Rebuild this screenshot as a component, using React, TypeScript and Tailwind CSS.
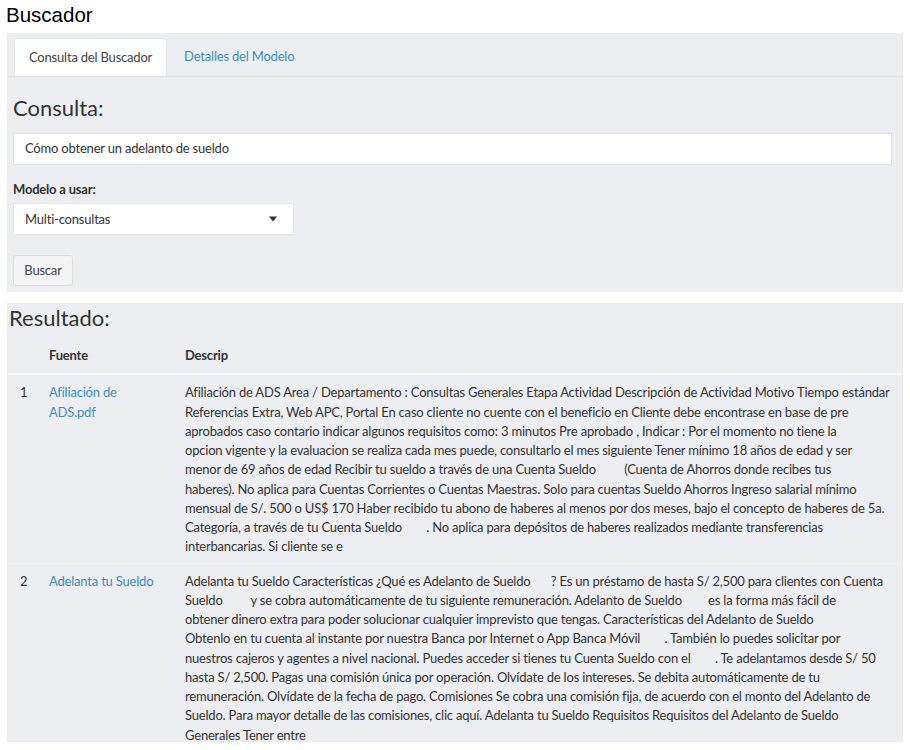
import React from 'react';

const gap = (w: string) => <span className={`inline-block ${w}`} />;

const row1: React.ReactNode[] = [
  'Afiliación de ADS Area / Departamento : Consultas Generales Etapa Actividad Descripción de Actividad Motivo Tiempo estándar',
  'Referencias Extra, Web APC, Portal En caso cliente no cuente con el beneficio en Cliente debe encontrase en base de pre',
  'aprobados caso contario indicar algunos requisitos como: 3 minutos Pre aprobado , Indicar : Por el momento no tiene la',
  'opcion vigente y la evaluacion se realiza cada mes puede, consultarlo el mes siguiente Tener mínimo 18 años de edad y ser',
  <>menor de 69 años de edad Recibir tu sueldo a través de una Cuenta Sueldo {gap('w-[22px]')} (Cuenta de Ahorros donde recibes tus</>,
  'haberes). No aplica para Cuentas Corrientes o Cuentas Maestras. Solo para cuentas Sueldo Ahorros Ingreso salarial mínimo',
  'mensual de S/. 500 o US$ 170 Haber recibido tu abono de haberes al menos por dos meses, bajo el concepto de haberes de 5a.',
  <>Categoría, a través de tu Cuenta Sueldo {gap('w-[18px]')} . No aplica para depósitos de haberes realizados mediante transferencias</>,
  'interbancarias. Si cliente se e',
];

const row2: React.ReactNode[] = [
  <>Adelanta tu Sueldo Características ¿Qué es Adelanto de Sueldo {gap('w-[14px]')} ? Es un préstamo de hasta S/ 2,500 para clientes con Cuenta</>,
  <>Sueldo {gap('w-[22px]')} y se cobra automáticamente de tu siguiente remuneración. Adelanto de Sueldo {gap('w-[20px]')} es la forma más fácil de</>,
  'obtener dinero extra para poder solucionar cualquier imprevisto que tengas. Características del Adelanto de Sueldo',
  <>Obtenlo en tu cuenta al instante por nuestra Banca por Internet o App Banca Móvil {gap('w-[18px]')} . También lo puedes solicitar por</>,
  <>nuestros cajeros y agentes a nivel nacional. Puedes acceder si tienes tu Cuenta Sueldo con el {gap('w-[18px]')} . Te adelantamos desde S/ 50</>,
  'hasta S/ 2,500. Pagas una comisión única por operación. Olvídate de los intereses. Se debita automáticamente de tu',
  'remuneración. Olvídate de la fecha de pago. Comisiones Se cobra una comisión fija, de acuerdo con el monto del Adelanto de',
  'Sueldo. Para mayor detalle de las comisiones, clic aquí. Adelanta tu Sueldo Requisitos Requisitos del Adelanto de Sueldo',
  'Generales Tener entre',
];

const results = [
  { id: 1, fuente: <>Afiliación de<br />ADS.pdf</>, lines: row1 },
  { id: 2, fuente: <>Adelanta tu Sueldo</>, lines: row2 },
];

export default function App() {
  return (
    <div className="min-h-[750px] bg-white text-[#333] font-['Lato',sans-serif] text-[13px] tracking-[-0.2px] leading-[19.25px]">
      <h1 className="px-[6px] pt-[3px] h-[33px] font-['Liberation_Sans',Arial,sans-serif] text-[20.5px] leading-[24px] tracking-normal text-black">
        Buscador
      </h1>

      {/* Panel de consulta */}
      <div className="mx-[7px] h-[259px] bg-[#eceef2]">
        <div className="flex pt-[5px] px-[7px] border-b border-[#dcdfe4]">
          <div className="h-[38px] -mb-px px-[14px] flex items-center bg-white border border-b-0 border-[#e4e6ea] rounded-t-[3px] text-[#444]">
            Consulta del Buscador
          </div>
          <div className="h-[38px] px-[17px] flex items-center text-[#3c8dbc]">
            Detalles del Modelo
          </div>
        </div>
        <div className="px-[6px]">
          <h2 className="mt-[17px] text-[22px] leading-[28px] tracking-normal text-[#333]">Consulta:</h2>
          <div className="mt-[11px] h-[32px] w-[879px] bg-white border border-[#e0e2e6] flex items-center px-[11px]">
            Cómo obtener un adelanto de sueldo
          </div>
          <div className="mt-[15px] font-bold text-[#333]">Modelo a usar:</div>
          <div className="mt-[4px] h-[32px] w-[281px] bg-white border border-[#e4e6ea] flex items-center justify-between px-[11px]">
            <span>Multi-consultas</span>
            <svg width="10" height="6" viewBox="0 0 10 6" className="mr-[4px]">
              <path d="M1 0.5 L9 0.5 L5 5.5 Z" fill="#333" />
            </svg>
          </div>
          <button className="mt-[20px] h-[31px] w-[60px] bg-[#f4f4f4] border border-[#dcdcdc] rounded-[3px] text-[#444] flex items-center justify-center">
            Buscar
          </button>
        </div>
      </div>

      {/* Resultados */}
      <div className="mx-[7px] mt-[11px] h-[439px] bg-[#eceef2] overflow-hidden">
        <h2 className="pl-[2px] pt-[1px] text-[22px] leading-[28px] tracking-normal text-[#333]">Resultado:</h2>
        <table className="mt-[6px] w-full table-fixed border-collapse">
          <colgroup>
            <col className="w-[34px]" />
            <col className="w-[136px]" />
            <col />
          </colgroup>
          <thead>
            <tr className="border-b-2 border-[#f5f6f8]">
              <th className="py-[8px]" />
              <th className="py-[8px] pl-[8px] text-left font-bold">Fuente</th>
              <th className="py-[8px] pl-[8px] text-left font-bold">Descrip</th>
            </tr>
          </thead>
          <tbody>
            {results.map((r) => (
              <tr key={r.id} className="border-t border-[#f5f6f8] align-top">
                <td className="pt-[8px] pb-[6px] pl-[13px]">{r.id}</td>
                <td className="pt-[8px] pb-[6px] pl-[8px] text-[#3c8dbc]">{r.fuente}</td>
                <td className="pt-[8px] pb-[6px] pl-[8px] pr-[6px] whitespace-nowrap">
                  {r.lines.map((l, i) => (
                    <div key={i}>{l}</div>
                  ))}
                </td>
              </tr>
            ))}
          </tbody>
        </table>
      </div>
    </div>
  );
}
